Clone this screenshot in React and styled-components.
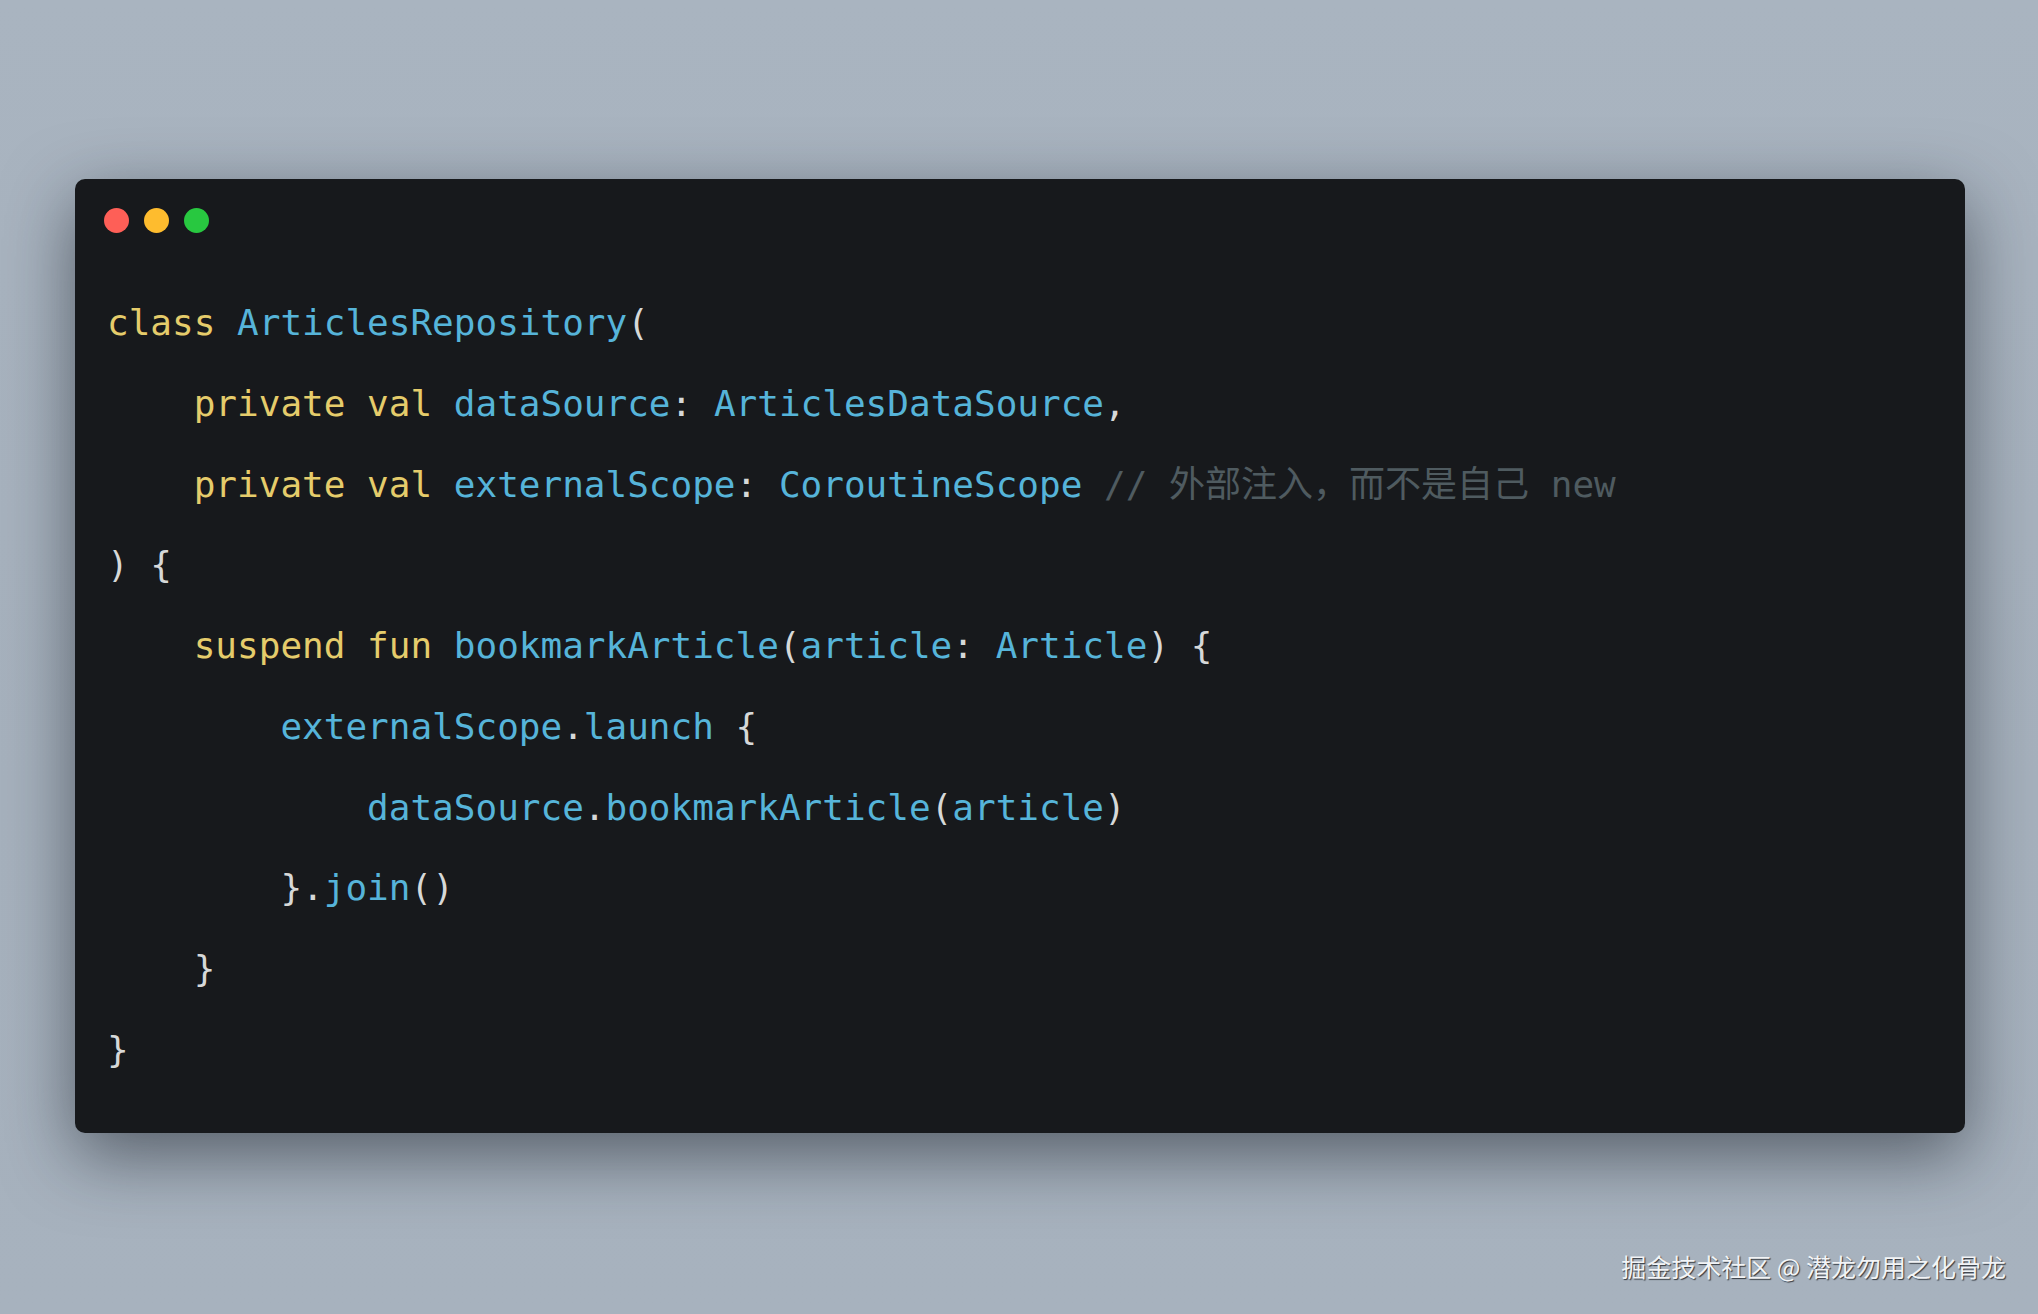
import React from 'react';
import styled, { createGlobalStyle } from 'styled-components';

const GlobalStyle = createGlobalStyle`
    html, body {
        margin: 0;
        padding: 0;
    }
    body {
        background: #a8b3bf;
    }
`;

const colors = {
    kw: '#e5cc6b',
    id: '#56b4d9',
    punc: '#d6d8d8',
    comment: '#4f5b60',
};

const code = [
    [['kw', 'class '], ['id', 'ArticlesRepository'], ['punc', '(']],
    [['kw', '    private val '], ['id', 'dataSource'], ['punc', ': '], ['id', 'ArticlesDataSource'], ['punc', ',']],
    [['kw', '    private val '], ['id', 'externalScope'], ['punc', ': '], ['id', 'CoroutineScope'], ['comment', ' // 外部注入，而不是自己 new']],
    [['punc', ') {']],
    [['kw', '    suspend fun '], ['id', 'bookmarkArticle'], ['punc', '('], ['id', 'article'], ['punc', ': '], ['id', 'Article'], ['punc', ') {']],
    [['id', '        externalScope'], ['punc', '.'], ['id', 'launch'], ['punc', ' {']],
    [['id', '            dataSource'], ['punc', '.'], ['id', 'bookmarkArticle'], ['punc', '('], ['id', 'article'], ['punc', ')']],
    [['punc', '        }.'], ['id', 'join'], ['punc', '()']],
    [['punc', '    }']],
    [['punc', '}']],
];

const App = () => {
    return (
        <Page>
            <GlobalStyle />
            <Window>
                <TitleBar>
                    <Light color="#fe5f57" />
                    <Light color="#febc2e" />
                    <Light color="#28c840" />
                </TitleBar>
                <Code>
                    {code.map((line, i) => (
                        <Line key={i}>
                            {line.map(([kind, text], j) => (
                                <Token key={j} kind={kind}>{text}</Token>
                            ))}
                        </Line>
                    ))}
                </Code>
            </Window>
            <Watermark>掘金技术社区 @ 潜龙勿用之化骨龙</Watermark>
        </Page>
    );
};

const Page = styled.div`
    position: relative;
    width: 2038px;
    height: 1314px;
    box-sizing: border-box;
    padding: 179px 73px 0 75px;
    background: linear-gradient(180deg, #a9b4c0 0%, #a6b1bd 60%, #a7b2be 100%);
    overflow: hidden;
`;

const Window = styled.div`
    height: 954px;
    box-sizing: border-box;
    background: #17191c;
    border-radius: 10px;
    box-shadow: 0 22px 70px rgba(20, 26, 34, 0.55);
    padding: 29px 32px 0 29px;
`;

const TitleBar = styled.div`
    display: flex;
    gap: 15px;
`;

const Light = styled.span`
    width: 25px;
    height: 25px;
    border-radius: 50%;
    background: ${({ color }) => color};
`;

const Code = styled.pre`
    margin: 50px 0 0 3px;
    font-family: "DejaVu Sans Mono", "Noto Sans CJK SC", monospace;
    font-size: 36px;
    line-height: 80.75px;
    color: #d6d8d8;
`;

const Line = styled.div`
    white-space: pre;
`;

const Token = styled.span`
    color: ${({ kind }) => colors[kind]};
`;

const Watermark = styled.div`
    position: absolute;
    right: 32px;
    bottom: 30px;
    font-family: "Noto Sans CJK SC", sans-serif;
    font-size: 25px;
    color: #f2f4f6;
    text-shadow: 1px 1px 1px rgba(30, 34, 40, 0.85);
`;

export default App;
